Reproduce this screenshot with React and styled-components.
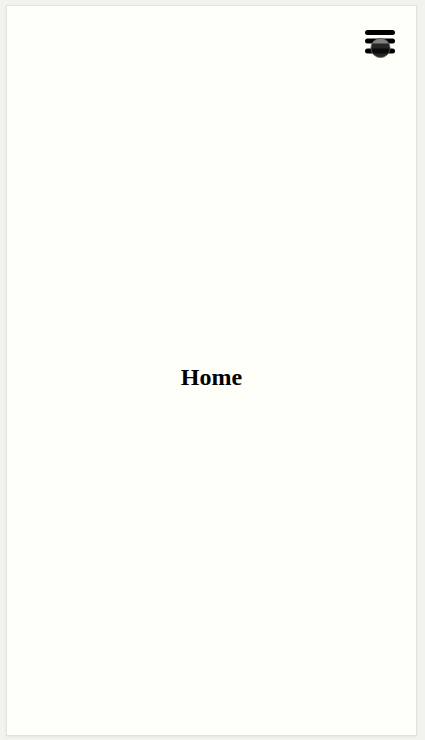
import React from 'react';
import styled, { createGlobalStyle } from 'styled-components';

const GlobalStyle = createGlobalStyle`
    html, body {
        margin: 0;
        padding: 0;
        background: #f2f2ee;
    }
    #root {
        height: 740px;
    }
`

// hamburger with the pressed ripple still showing
const MenuIcon = () => (
    <svg width="32" height="30" viewBox="0 0 32 30">
        <defs>
            <clipPath id="ripple">
                <circle cx="16.5" cy="18" r="9.6" />
            </clipPath>
        </defs>
        <rect x="1" y="0" width="30" height="5" rx="2.5" fill="#000" />
        <rect x="1" y="8.5" width="30" height="5" rx="2.5" fill="#000" />
        <rect x="1" y="18.5" width="30" height="5" rx="2.5" fill="#000" />
        <circle cx="16.5" cy="18" r="9.6" fill="#262626" />
        <g clipPath="url(#ripple)">
            <rect x="1" y="8.5" width="30" height="5" fill="#808080" />
            <rect x="1" y="18.5" width="30" height="5" fill="#0a0a0a" />
        </g>
        <circle cx="16.5" cy="18" r="9.6" fill="none" stroke="#606060" strokeWidth="0.8" />
    </svg>
)

const App = () => {
    return (
        <>
            <GlobalStyle />
            <Page>
                <Panel>
                    <MenuButton aria-label="menu">
                        <MenuIcon />
                    </MenuButton>
                    <Main>
                        <Title>Home</Title>
                    </Main>
                </Panel>
            </Page>
        </>
    )
}

export default App

const Page = styled.div`
    height: 740px;
    padding: 5px 8px 4px 6px;
    box-sizing: border-box;
    display: flex;
`

const Panel = styled.div`
    position: relative;
    flex: 1;
    background: #fffffa;
    border: 1px solid #e2e2de;
    box-shadow: 0 1px 3px rgba(0, 0, 0, 0.06);
    display: flex;
    flex-direction: column;
`

const MenuButton = styled.button`
    position: absolute;
    top: 24px;
    right: 20px;
    padding: 0;
    border: none;
    background: transparent;
    line-height: 0;
    cursor: pointer;
`

const Main = styled.main`
    flex: 1;
    display: flex;
    align-items: center;
    justify-content: center;
    padding-top: 13px;
`

const Title = styled.h1`
    margin: 0;
    font-family: "Liberation Serif", "Times New Roman", serif;
    font-weight: bold;
    font-size: 24px;
    color: #000;
`
